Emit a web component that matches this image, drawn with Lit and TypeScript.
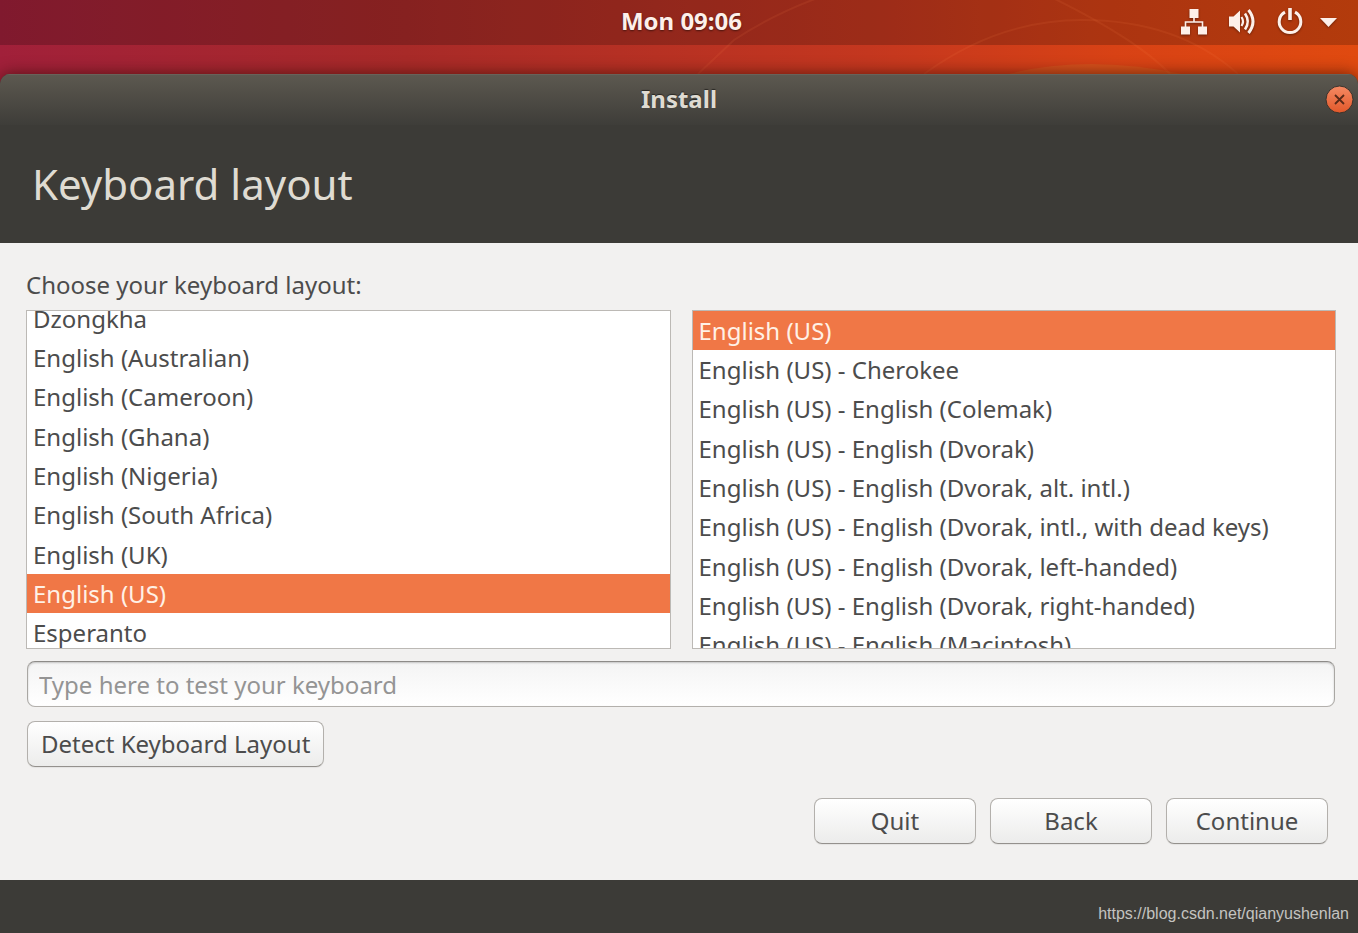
import { LitElement, html, css, svg } from "lit";
import { customElement, property, query, state } from "lit/decorators.js";

const LAYOUTS = [
  "Dzongkha",
  "English (Australian)",
  "English (Cameroon)",
  "English (Ghana)",
  "English (Nigeria)",
  "English (South Africa)",
  "English (UK)",
  "English (US)",
  "Esperanto",
];

const VARIANTS = [
  "English (US)",
  "English (US) - Cherokee",
  "English (US) - English (Colemak)",
  "English (US) - English (Dvorak)",
  "English (US) - English (Dvorak, alt. intl.)",
  "English (US) - English (Dvorak, intl., with dead keys)",
  "English (US) - English (Dvorak, left-handed)",
  "English (US) - English (Dvorak, right-handed)",
  "English (US) - English (Macintosh)",
];

@customElement("top-bar")
class TopBar extends LitElement {
  static styles = css`
    :host {
      display: grid;
      grid-template-columns: 1fr auto 1fr;
      align-items: center;
      height: 45px;
      padding: 0 21px 3px 26px;
      box-sizing: border-box;
      background: rgba(0, 0, 0, 0.2);
      color: #fdf0ea;
    }
    .clock {
      grid-column: 2;
      font-size: 24px;
      line-height: 32px;
      font-weight: 700;
      text-shadow: 0 1px 2px rgba(0, 0, 0, 0.5);
    }
    .tray {
      justify-self: end;
      display: flex;
      align-items: center;
      gap: 20px;
      padding: 0;
      border: 0;
      background: none;
      color: inherit;
      filter: drop-shadow(0 1px 1px rgba(0, 0, 0, 0.4));
    }
    .icon {
      display: block;
    }
    .arrow {
      margin-left: -4px;
    }
  `;

  render() {
    return html`
      <time class="clock">Mon 09:06</time>
      <button class="tray" aria-label="System menu">
        <svg class="icon" width="28" height="28" viewBox="0 0 28 28" fill="currentColor">
          <path d="M9.500 2h9v9h-9zM1 19.500h9v8H1zM18 19.500h9v8h-9z" />
          <path d="M14 10v5M5.500 20v-5h17v5" fill="none" stroke="currentColor" stroke-width="1.600" />
        </svg>
        <svg class="icon" width="28" height="28" viewBox="0 0 28 28" fill="currentColor">
          <path d="M1 9.500h4.500L12 3.500v22l-6.500-6H1z" />
          <g fill="none" stroke="currentColor">
            <path d="M13.500 10q3 4.500 0 9" stroke-width="2.200" />
            <path d="M17 6.500q5.500 8 0 16" stroke-width="2.600" />
            <path d="M20.500 3q9 11.500 0 23" stroke-width="3" />
          </g>
        </svg>
        <svg class="icon" width="28" height="28" viewBox="0 0 28 28" fill="none" stroke="currentColor">
          <path d="M9 5.200a10.800 10.800 0 1 0 10 0" stroke-width="3" />
          <path d="M14 1v12" stroke-width="3.600" />
        </svg>
        <svg class="icon arrow" width="17" height="28" viewBox="0 0 17 28" fill="currentColor">
          <path d="M0 11h17l-8.500 9z" />
        </svg>
      </button>
    `;
  }
}

@customElement("layout-list")
class LayoutList extends LitElement {
  @property({ attribute: false }) items: string[] = [];
  @property() label = "";
  @property() value = "";
  @property({ type: Number }) offset = 0;
  @query("select") private list!: HTMLSelectElement;

  static styles = css`
    :host {
      display: block;
      min-width: 0;
    }
    .list {
      display: block;
      width: 100%;
      height: 339px;
      box-sizing: border-box;
      margin: 0;
      padding: 0;
      border: 1px solid #bcb9b5;
      border-radius: 0;
      outline: none;
      background: #fff;
      font: inherit;
      overflow-y: auto;
      scrollbar-width: none;
    }
    .item {
      box-sizing: border-box;
      height: 39px;
      padding: 3px 6px 0;
      color: #4c4c4c;
    }
    .item:nth-child(3n) {
      height: 40px;
    }
    .item:checked {
      background: #f07746 linear-gradient(#f07746, #f07746);
      color: #fff1e6;
      -webkit-text-fill-color: #fff1e6;
    }
  `;

  firstUpdated() {
    requestAnimationFrame(() => {
      this.list.scrollTop = this.offset;
    });
  }

  render() {
    return html`
      <select class="list" size="9" aria-label=${this.label}>
        ${this.items.map(
          (item) => html`<option class="item" ?selected=${item === this.value}>${item}</option>`
        )}
      </select>
    `;
  }
}

@customElement("app-root")
class AppRoot extends LitElement {
  @state() private sample = "";

  static styles = css`
    :host {
      display: flex;
      flex-direction: column;
      min-height: 100vh;
      position: relative;
      font-family: "Noto Sans", "Open Sans", sans-serif;
      font-size: 24px;
      line-height: 32px;
      color: #4c4c4c;
      background: linear-gradient(90deg, #a1203a 0, #a82a28 30%, #c4371f 64%, #d84215 82%, #e04a10 100%);
    }
    .rays {
      position: absolute;
      top: 0;
      right: 0;
      width: 760px;
      height: 74px;
      pointer-events: none;
    }
    .window {
      flex: 1;
      display: flex;
      flex-direction: column;
      margin-top: 29px;
      border-radius: 10px 10px 0 0;
      background: #3c3b37;
      box-shadow: 0 0 16px rgba(40, 10, 0, 0.65);
      overflow: hidden;
      position: relative;
    }
    .titlebar {
      display: grid;
      grid-template-columns: 1fr auto 1fr;
      align-items: center;
      height: 51px;
      padding: 0 4px;
      background: linear-gradient(#5d5950, #3e3d39);
      box-shadow: inset 0 1px #68625a;
    }
    .title {
      grid-column: 2;
      padding-bottom: 2px;
      font-weight: 700;
      color: #dfdbd2;
      text-shadow: 0 -1px 1px rgba(0, 0, 0, 0.5);
    }
    .close {
      justify-self: end;
      padding: 0;
      border: 0;
      background: none;
    }
    .glyph {
      display: block;
    }
    .heading {
      margin: 0;
      padding: 30px 32px;
      font-size: 42px;
      line-height: 58px;
      font-weight: 400;
      color: #dfdbd2;
    }
    .body {
      flex: 1;
      display: flex;
      flex-direction: column;
      padding: 26px 22px 36px 26px;
      background: #f2f1f0;
    }
    .lists {
      display: grid;
      grid-template-columns: 1fr 1fr;
      gap: 21px;
      margin-top: 9px;
    }
    .entry,
    .button {
      box-sizing: border-box;
      height: 46px;
      margin: 0;
      border: 1px solid #b3b0ac;
      border-radius: 8px;
      font: inherit;
      color: #4c4c4c;
    }
    .entry {
      margin: 12px 1px 0;
      padding: 0 11px;
      border-color: #8d8b88 #a9a7a3 #b3b0ac;
      background: linear-gradient(#f4f4f4, #fff);
      box-shadow: inset 0 1px 2px rgba(0, 0, 0, 0.2);
      outline: none;
    }
    .entry::placeholder {
      color: #949494;
      opacity: 1;
    }
    .button {
      padding: 0 13px;
      border-bottom-color: #94918d;
      background: linear-gradient(#fff, #ececeb);
      box-shadow: 0 1px 1px rgba(0, 0, 0, 0.06);
      white-space: nowrap;
    }
    .detect {
      align-self: flex-start;
      margin: 14px 1px 0;
    }
    .actions {
      display: flex;
      justify-content: flex-end;
      gap: 14px;
      margin-top: auto;
      padding-right: 8px;
    }
    .action {
      width: 162px;
    }
    .footer {
      display: flex;
      justify-content: flex-end;
      align-items: flex-end;
      height: 53px;
      box-sizing: border-box;
      padding: 0 9px 9px;
      font-family: "Liberation Sans", Arial, sans-serif;
      font-size: 16px;
      line-height: 20px;
    }
    .link {
      color: #c4c3c0;
      text-decoration: none;
    }
  `;

  private rays() {
    return svg`
      <g fill="none" stroke="#ff8a50" stroke-opacity="0.1" stroke-width="2">
        <path d="M100 74 L136 40 Q175 14 225 -4" />
        <path d="M326 74 Q400 20 484 20 Q580 20 640 74" />
        <path d="M455 -2 Q540 40 572 74" />
      </g>
      <path d="M410 74 Q490 54 584 74z" fill="#d08a30" fill-opacity="0.2" />
    `;
  }

  render() {
    return html`
      <svg class="rays" viewBox="0 0 760 74" aria-hidden="true">${this.rays()}</svg>
      <top-bar></top-bar>
      <main class="window">
        <div class="titlebar">
          <span class="title">Install</span>
          <button class="close" aria-label="Close">
            <svg class="glyph" width="29" height="29" viewBox="0 0 29 29">
              <defs>
                <linearGradient id="ball" x1="0" y1="0" x2="0" y2="1">
                  <stop offset="0" stop-color="#f58a63" />
                  <stop offset="1" stop-color="#e2582a" />
                </linearGradient>
              </defs>
              <circle cx="14.500" cy="14.500" r="13.500" fill="url(#ball)" stroke="#39332d" />
              <path d="M10 10l9 9M19 10l-9 9" stroke="#5a2a18" stroke-width="1.800" />
            </svg>
          </button>
        </div>
        <h1 class="heading">Keyboard layout</h1>
        <section class="body">
          <div class="prompt">Choose your keyboard layout:</div>
          <div class="lists">
            <layout-list
              label="Keyboard layout"
              .items=${LAYOUTS}
              value="English (US)"
              offset="12"
            ></layout-list>
            <layout-list label="Layout variant" .items=${VARIANTS} value="English (US)"></layout-list>
          </div>
          <input
            class="entry"
            type="text"
            aria-label="Keyboard test"
            placeholder="Type here to test your keyboard"
            .value=${this.sample}
            @input=${(e: Event) => (this.sample = (e.target as HTMLInputElement).value)}
          />
          <button class="button detect">Detect Keyboard Layout</button>
          <div class="actions">
            <button class="button action">Quit</button>
            <button class="button action">Back</button>
            <button class="button action">Continue</button>
          </div>
        </section>
        <footer class="footer">
          <a class="link" href="https://blog.csdn.net/qianyushenlan">https://blog.csdn.net/qianyushenlan</a>
        </footer>
      </main>
    `;
  }
}
